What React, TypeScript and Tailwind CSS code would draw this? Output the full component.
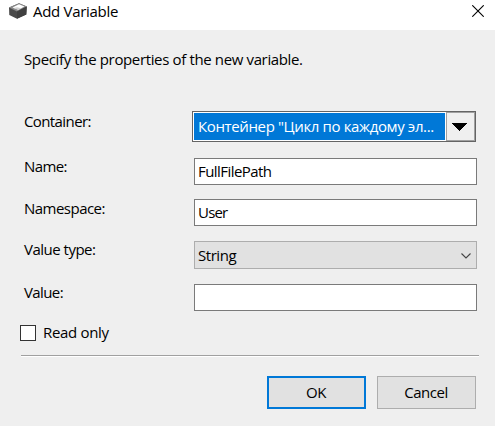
import type { ReactNode } from "react";

function Row({ label, tracking, className, children }: { label: string; tracking: string; className: string; children: ReactNode }) {
  return (
    <div className={`flex items-start ${className}`}>
      <label className={`w-[170px] shrink-0 ${tracking}`}>{label}</label>
      {children}
    </div>
  );
}

function TextBox({ value, tracking = "" }: { value: string; tracking?: string }) {
  return (
    <div className={`flex h-[27px] w-[283px] items-start border border-[#7a7a7a] bg-white pl-[3px] pt-[2px] ${tracking}`}>
      {value}
    </div>
  );
}

export default function App() {
  return (
    <div className="h-[426px] w-[495px] overflow-hidden whitespace-nowrap bg-[#efefef] font-['Open_Sans','Noto_Sans',sans-serif] text-[15px] leading-5 text-black">
      <header className="flex h-[30px] items-start bg-white pl-2 pr-[11px]">
        <svg className="mt-[3px] shrink-0" width="20" height="17" viewBox="0 0 20 17">
          <path d="M1 4.5 11 0.3 18.8 3.5 18.3 11.5 9 15.8 1.3 12Z" fill="#4a4a4a" />
          <path d="M1 4.5 11 0.3 18.8 3.5 9 8.6Z" fill="#8a8a8a" />
          <path d="M4.5 4.5 11 1.2 16.5 3.4 10.5 6.8Z" fill="#ffffff" />
          <path d="M5.5 5 9 4.2 13 5.2 10 6.8Z" fill="#d0d0d0" />
          <path d="M9 8.6V15.8L18.3 11.5 18.8 3.5Z" fill="#404040" />
        </svg>
        <h1 className="ml-[5px] mt-px tracking-[-0.3px]">Add Variable</h1>
        <svg className="ml-auto mt-[5px]" width="12" height="12" viewBox="0 0 12 12">
          <path d="M0.3 0.3 11.7 11.7M11.7 0.3 0.3 11.7" stroke="#000" strokeWidth="1.1" />
        </svg>
      </header>
      <main className="pl-6 pt-[19px]">
        <p className="h-[62px] tracking-[-0.36px]">Specify the properties of the new variable.</p>
        <Row label="Container:" tracking="tracking-[-0.6px]" className="h-[45px]">
          <div className="-ml-[2px] flex h-[31px] w-[284px] border border-[#646464] bg-white">
            <div className="ml-px mt-px flex h-[27px] w-[251px] items-start bg-[#0078d7] pl-1 pt-[3px] tracking-[-0.37px] text-white">
              Контейнер "Цикл по каждому эл...
            </div>
            <div className="ml-px flex h-[29px] w-[29px] items-center justify-center border border-[#a0a0a0] bg-[#efefef]">
              <svg className="-ml-[2px]" width="15" height="8" viewBox="0 0 15 8" shapeRendering="crispEdges">
                <path d="M0 0H15L7.5 8Z" />
              </svg>
            </div>
          </div>
        </Row>
        <Row label="Name:" tracking="tracking-[-0.6px]" className="h-[42px]">
          <div className="mt-[2px]"><TextBox value="FullFilePath" tracking="tracking-[-0.56px]" /></div>
        </Row>
        <Row label="Namespace:" tracking="tracking-[-0.52px]" className="h-[41px]">
          <div className="mt-px"><TextBox value="User" tracking="tracking-[-0.8px]" /></div>
        </Row>
        <Row label="Value type:" tracking="tracking-[-0.5px]" className="h-[43px]">
          <div className="mt-[2px] flex h-[28px] w-[283px] items-start justify-between border border-[#adadad] bg-[#e1e1e1] pl-[3px] pr-[5px] pt-[3px]">
            <span className="tracking-[-0.45px]">String</span>
            <svg className="mt-2" width="10" height="6" viewBox="0 0 10 6" fill="none">
              <path d="M0.5 0.5 5 5 9.5 0.5" stroke="#444" strokeWidth="1.1" />
            </svg>
          </div>
        </Row>
        <Row label="Value:" tracking="tracking-[-0.6px]" className="h-[40px]">
          <div className="mt-[2px]"><TextBox value="" /></div>
        </Row>
        <div className="-ml-1 flex h-[33px] items-start">
          <div className="mt-[3px] size-4 border border-[#333] bg-white" />
          <span className="ml-[7px] tracking-[-0.32px]">Read only</span>
        </div>
        <div className="-ml-[3px] h-[2px] w-[458px] border-b border-t border-b-white border-t-[#a0a0a0]" />
        <div className="mt-[19px] flex gap-[11px] pl-[243px]">
          <button className="h-[33px] w-[99px] border-2 border-[#0078d7] bg-[#e1e1e1] pb-px pr-px tracking-[-0.5px]">OK</button>
          <button className="h-[33px] w-[99px] border border-[#adadad] bg-[#e1e1e1] pb-px pr-px tracking-[-0.5px]">Cancel</button>
        </div>
      </main>
    </div>
  );
}
